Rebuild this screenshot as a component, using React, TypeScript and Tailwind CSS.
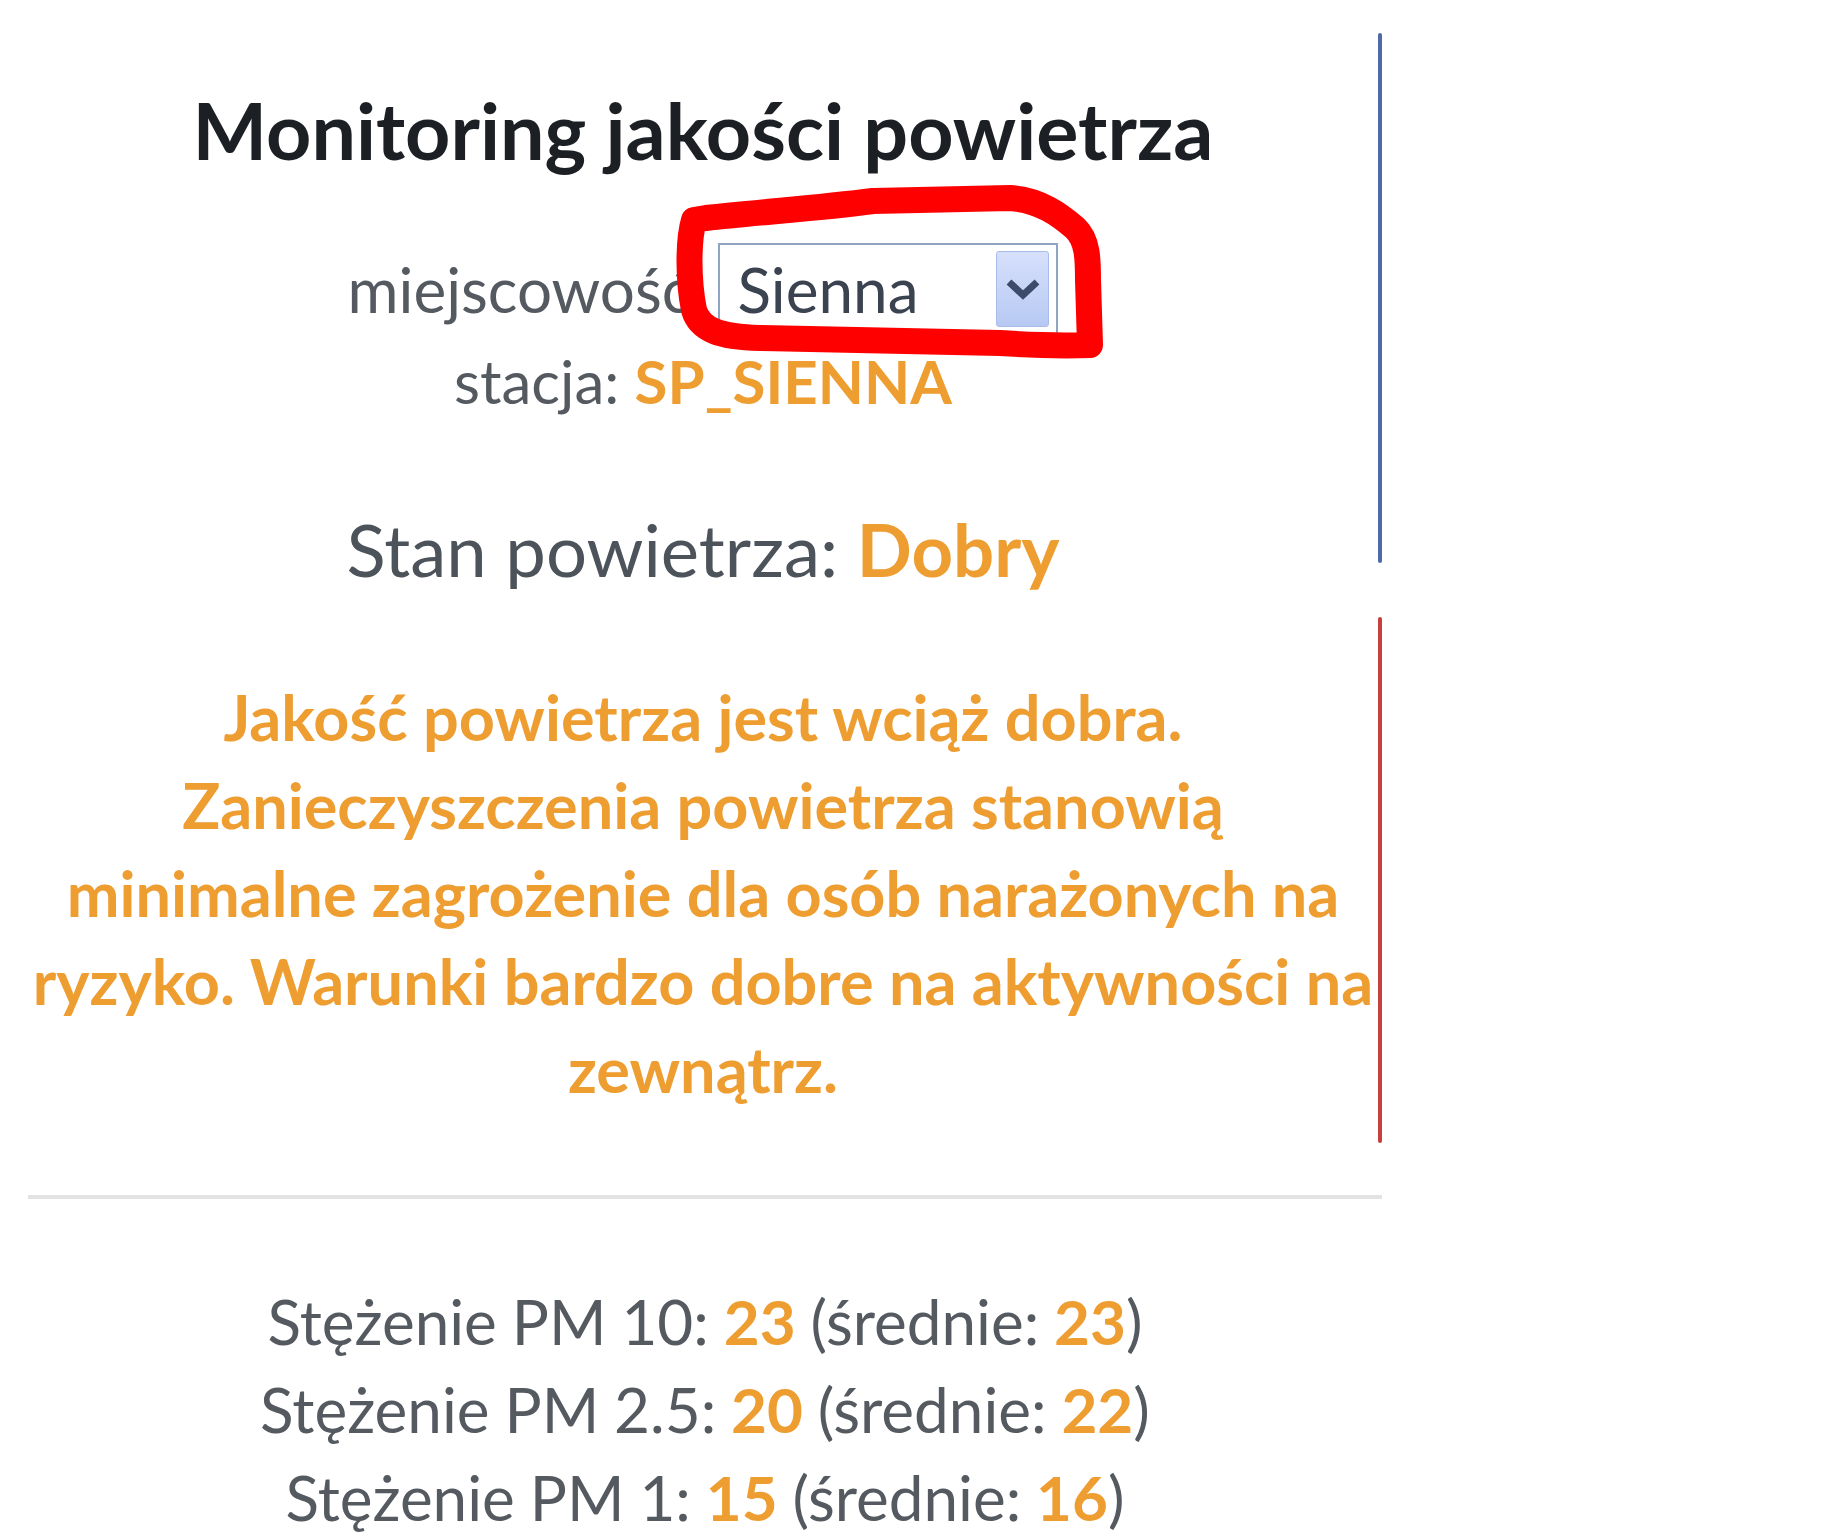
import React from 'react';

const ORANGE = 'text-[#ee9d31]';

const stats = [
  { label: 'Stężenie PM 10:', value: 23, avg: 23 },
  { label: 'Stężenie PM 2.5:', value: 20, avg: 22 },
  { label: 'Stężenie PM 1:', value: 15, avg: 16 },
];

const CitySelect: React.FC = () => (
  <div className="flex h-[92px] w-[340px] items-center justify-between border-2 border-[#8ea4c2] bg-white pl-[17px] pr-[7px]">
    <span className="text-[62px] leading-none text-[#3b4250]">Sienna</span>
    <div className="flex h-[76px] w-[53px] items-center justify-center rounded-[3px] border border-[#a9bbea] bg-gradient-to-b from-[#d6e0fb] to-[#b7c9f3]">
      <svg width="36" height="24" viewBox="0 0 36 24">
        <polyline points="4,5 18,18 32,5" fill="none" stroke="#3d4a6a" strokeWidth="7" />
      </svg>
    </div>
  </div>
);

export default function App() {
  return (
    <div className="relative h-[1536px] w-[1842px] overflow-hidden bg-white font-['Lato','Open_Sans',sans-serif]">
      <div className="w-[1382px] pl-[28px]">
        <div className="flex">
          <div className="flex-1 text-center">
            <h1 className="mt-[80px] text-[79px] font-bold leading-[100px] text-[#1c1f24]">
              Monitoring jakości powietrza
            </h1>

            <div className="mt-[63px] flex items-center justify-center gap-[27px]">
              <span className="text-[62px] leading-[88px] text-[#555a61]">miejscowość</span>
              <CitySelect />
            </div>

            <div className="mt-[2px] text-[60px] leading-[88px] text-[#555a61]">
              stacja: <span className={`font-bold ${ORANGE}`}>SP_SIENNA</span>
            </div>

            <div className="mt-[74px] text-[72.5px] leading-[100px] text-[#4d535b]">
              Stan powietrza: <span className={`font-bold ${ORANGE}`}>Dobry</span>
            </div>

            <p className={`mt-[74px] text-[63px] font-bold leading-[88px] ${ORANGE}`}>
              Jakość powietrza jest wciąż dobra.
              <br />
              Zanieczyszczenia powietrza stanowią
              <br />
              minimalne zagrożenie dla osób narażonych na
              <br />
              ryzyko. Warunki bardzo dobre na aktywności na
              <br />
              zewnątrz.
            </p>
          </div>

          {/* status rail */}
          <div className="flex w-[4px] flex-col pt-[33px]">
            <div className="h-[530px] rounded-full bg-[#4f6aa8]" />
            <div className="mt-[54px] h-[526px] rounded-full bg-[#c8403e]" />
          </div>
        </div>

        <hr className="mt-[52px] border-t-4 border-[#e3e3e3]" />

        <div className="mt-[78px] text-center text-[62px] leading-[88px] text-[#555a61] [word-spacing:-1px]">
          {stats.map((s) => (
            <div key={s.label}>
              {s.label} <span className={`font-bold ${ORANGE}`}>{s.value}</span> (średnie:{' '}
              <span className={`font-bold ${ORANGE}`}>{s.avg}</span>)
            </div>
          ))}
        </div>
      </div>

      {/* hand-drawn marker around the city picker */}
      <svg className="pointer-events-none absolute left-0 top-0" width="1842" height="420">
        <path
          d="M 706 218 C 760 212, 820 208, 873 201 L 1010 198 C 1040 200, 1060 215, 1075 228 C 1088 240, 1088 260, 1088 280 L 1090 345 C 1060 346, 1030 345, 1000 343 L 760 338 C 720 337, 700 330, 694 310 C 688 280, 688 240, 694 220 Z"
          fill="none"
          stroke="#ff0000"
          strokeWidth="26"
          strokeLinejoin="round"
        />
      </svg>
    </div>
  );
}
